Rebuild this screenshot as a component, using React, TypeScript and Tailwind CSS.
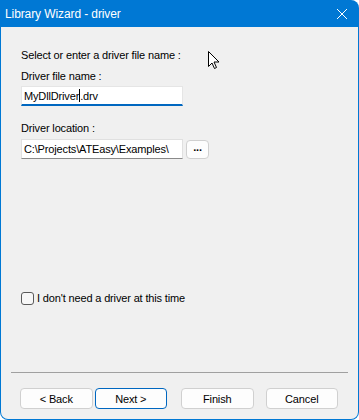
import React from "react";

function Btn({ label, primary, className = "" }: { label: string; primary?: boolean; className?: string }) {
  return (
    <div
      className={`h-[21px] w-[73px] rounded-[4px] bg-[#fdfdfd] border flex items-center justify-center text-black ${
        primary ? "border-[#0067c0]" : "border-[#d0d0d0]"
      } ${className}`}
    >
      {label}
    </div>
  );
}

export default function App() {
  return (
    <div className="w-[359px] h-[420px] bg-white font-['Liberation_Sans',Arial,sans-serif] text-[11px] tracking-[-0.15px] leading-[16px] text-black relative">
      <div className="w-full h-full bg-[#0078d4] rounded-tr-[8px] rounded-b-[8px] flex flex-col px-px pb-px overflow-hidden">
        {/* Title bar */}
        <div className="h-[27px] shrink-0 flex items-center justify-between pl-[4px] pr-[10px] text-white">
          <span className="text-[12px] tracking-[-0.1px]">Library Wizard - driver</span>
          <svg width="12" height="12" viewBox="0 0 12 12">
            <path d="M1 1 L11 11 M11 1 L1 11" stroke="white" strokeWidth="1" fill="none" />
          </svg>
        </div>
        {/* Content */}
        <div className="flex-1 bg-[#f0f0f0] rounded-b-[7px] flex flex-col px-[20px] pt-[20px]">
          <div>Select or enter a driver file name :</div>
          <div className="mt-[5px]">Driver file name :</div>
          <div className="mt-[2px] w-[162px] h-[20px] bg-white border border-[#e5e5e5] border-b-2 border-b-[#0067c0] flex items-center px-[2px]">
            <span>MyDllDriver</span>
            <span className="inline-block w-px h-[13px] bg-black"></span>
            <span>.drv</span>
          </div>
          <div className="mt-[14px]">Driver location :</div>
          <div className="mt-[3px] flex items-center gap-[3px]">
            <div className="w-[162px] h-[20px] bg-white border border-[#e0e0e0] border-b-[#8a8a8a] flex items-center px-[2px] overflow-hidden whitespace-nowrap">
              C:\Projects\ATEasy\Examples\
            </div>
            <div className="w-[23px] h-[19px] rounded-[4px] bg-[#fdfdfd] border border-[#d0d0d0] flex items-center justify-center font-bold leading-none pb-[3px]">
              ...
            </div>
          </div>
          <div className="mt-[131px] flex items-center gap-[3px]">
            <div className="w-[13px] h-[13px] rounded-[3px] border border-[#5a5a5a] bg-[#f7f7f7]"></div>
            <span>I don't need a driver at this time</span>
          </div>
          <div className="mt-[66px] -mx-[10px] h-px bg-[#a0a0a0]"></div>
          <div className="mt-[15px] flex">
            <Btn label="< Back" className="-ml-[1px]" />
            <Btn label="Next >" primary className="ml-[2px]" />
            <Btn label="Finish" className="ml-[14px]" />
            <Btn label="Cancel" className="ml-[12px]" />
          </div>
        </div>
      </div>
      {/* mouse cursor */}
      <svg className="absolute left-[208px] top-[51px]" width="12" height="19" viewBox="0 0 12 19">
        <path d="M0.5 0.5 L0.5 15.5 L4 12 L6.5 17.5 L8.5 16.5 L6 11 L11 11 Z" fill="white" stroke="black" strokeWidth="1" />
      </svg>
    </div>
  );
}
